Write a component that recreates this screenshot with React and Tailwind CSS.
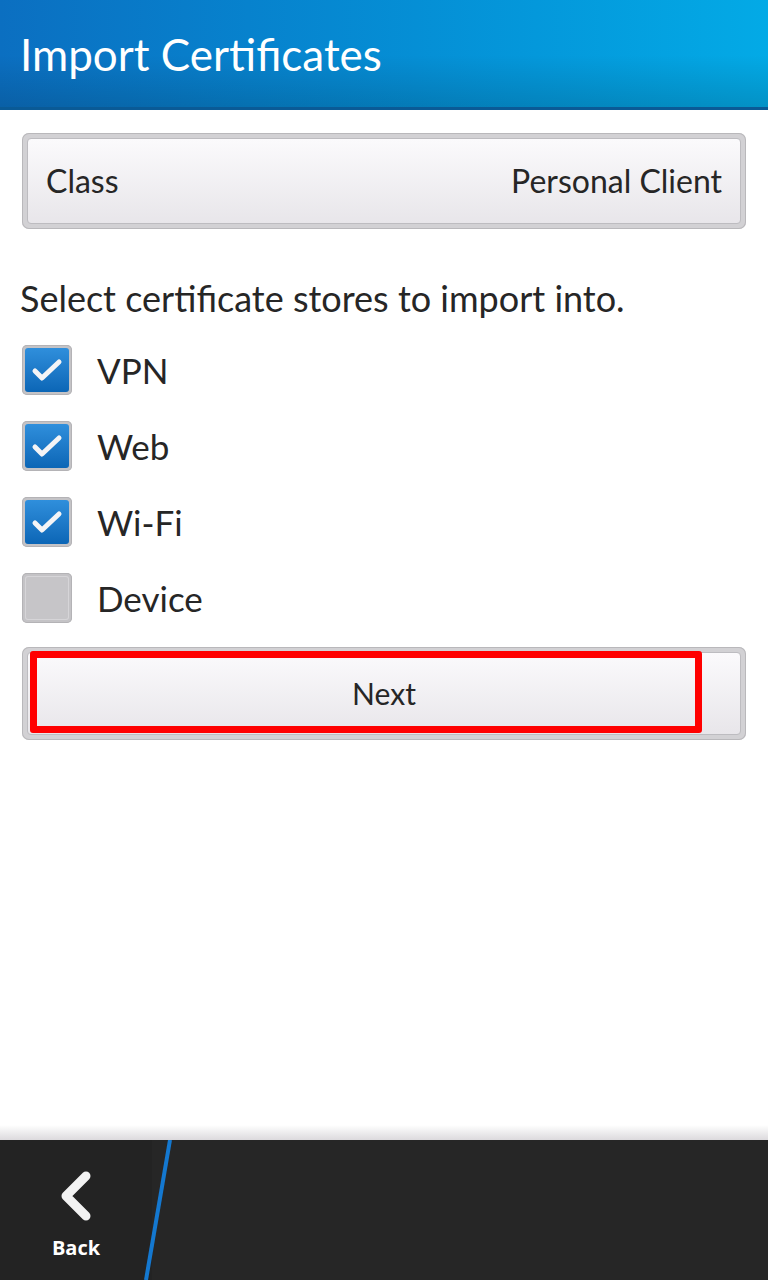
import React from 'react';

function Check({ checked }) {
  return (
    <div className="w-[50px] h-[50px] rounded-[5px] bg-[#c4c3c6] p-[3px] shadow-[inset_0_0_0_1px_#b4b3b6]">
      {checked ? (
        <div className="w-full h-full rounded-[3px] bg-gradient-to-b from-[#2f8fdc] to-[#0b66b6] flex items-center justify-center">
          <svg width="36" height="30" viewBox="0 0 36 30">
            <path d="M6 16 L13 23 L30 7" fill="none" stroke="#f4f4f6" strokeWidth="5" strokeLinecap="round" strokeLinejoin="round" />
          </svg>
        </div>
      ) : (
        <div className="w-full h-full rounded-[3px] bg-[#c6c5c8] shadow-[inset_0_0_0_1px_#d6d5d8]" />
      )}
    </div>
  );
}

function App() {
  const stores = [
    { name: 'VPN', checked: true },
    { name: 'Web', checked: true },
    { name: 'Wi-Fi', checked: true },
    { name: 'Device', checked: false },
  ];

  return (
    <div className="flex flex-col h-[1280px] bg-white text-[#262626]" style={{ fontFamily: 'Lato, "Open Sans", sans-serif' }}>
      <header className="h-[110px] bg-gradient-to-r from-[#0b6fc1] to-[#03aae6] relative flex items-center px-[20px]">
        <div className="absolute inset-0 bg-gradient-to-b from-transparent via-transparent to-[#00000026]" />
        <div className="absolute left-0 right-0 bottom-0 h-[3px] bg-[#0a5a96]" />
        <h1 className="relative text-white text-[44px] leading-none -mt-[2px]">Import Certificates</h1>
      </header>

      <main className="flex-1 px-[22px]">
        <div className="mt-[23px] h-[96px] rounded-[7px] bg-[#d2d1d4] p-[5px] shadow-[inset_0_0_0_1px_#b9b8bb]">
          <div className="h-full rounded-[4px] border border-[#bdbcc0] bg-gradient-to-b from-[#fbfafc] to-[#e8e6ea] flex items-center justify-between px-[18px] text-[32px]">
            <span>Class</span>
            <span>Personal Client</span>
          </div>
        </div>

        <p className="mt-[49px] h-[40px] leading-[40px] text-[36px] -ml-[2px]">Select certificate stores to import into.</p>

        <div className="mt-[14px]">
          {stores.map((s) => (
            <div key={s.name} className="h-[76px] flex items-center">
              <Check checked={s.checked} />
              <span className="ml-[25px] text-[35px]">{s.name}</span>
            </div>
          ))}
        </div>

        <div className="mt-[11px] h-[93px] rounded-[7px] bg-[#d2d1d4] p-[5px] shadow-[inset_0_0_0_1px_#b9b8bb] relative">
          <div className="h-full rounded-[4px] border border-[#bdbcc0] bg-gradient-to-b from-[#fbfafc] to-[#e8e6ea] flex items-center justify-center text-[30px]">
            Next
          </div>
          <div className="absolute left-[8px] top-[4px] w-[672px] h-[82px] border-[7px] border-[#ff0000] rounded-[3px]" />
        </div>
      </main>

      <div className="h-[15px] bg-gradient-to-b from-white to-[#dcdadd]" />
      <footer className="h-[140px] bg-[#232323] relative flex">
        <div className="w-[152px] flex flex-col items-center pt-[30px]">
          <svg width="40" height="52" viewBox="0 0 40 52">
            <path d="M30 6 L10 26 L30 46" fill="none" stroke="#f2f2f2" strokeWidth="9" strokeLinecap="round" strokeLinejoin="round" />
          </svg>
          <span className="mt-[16px] text-white font-bold text-[20px] leading-none" style={{ fontFamily: '"Open Sans", Lato, sans-serif' }}>Back</span>
        </div>
        <svg className="absolute left-[140px] top-0" width="36" height="140" viewBox="0 0 36 140">
          <line x1="30" y1="0" x2="6" y2="140" stroke="#1478d0" strokeWidth="4" />
        </svg>
        <div className="flex-1 bg-[#262626]" />
      </footer>
    </div>
  );
}

export default App;
